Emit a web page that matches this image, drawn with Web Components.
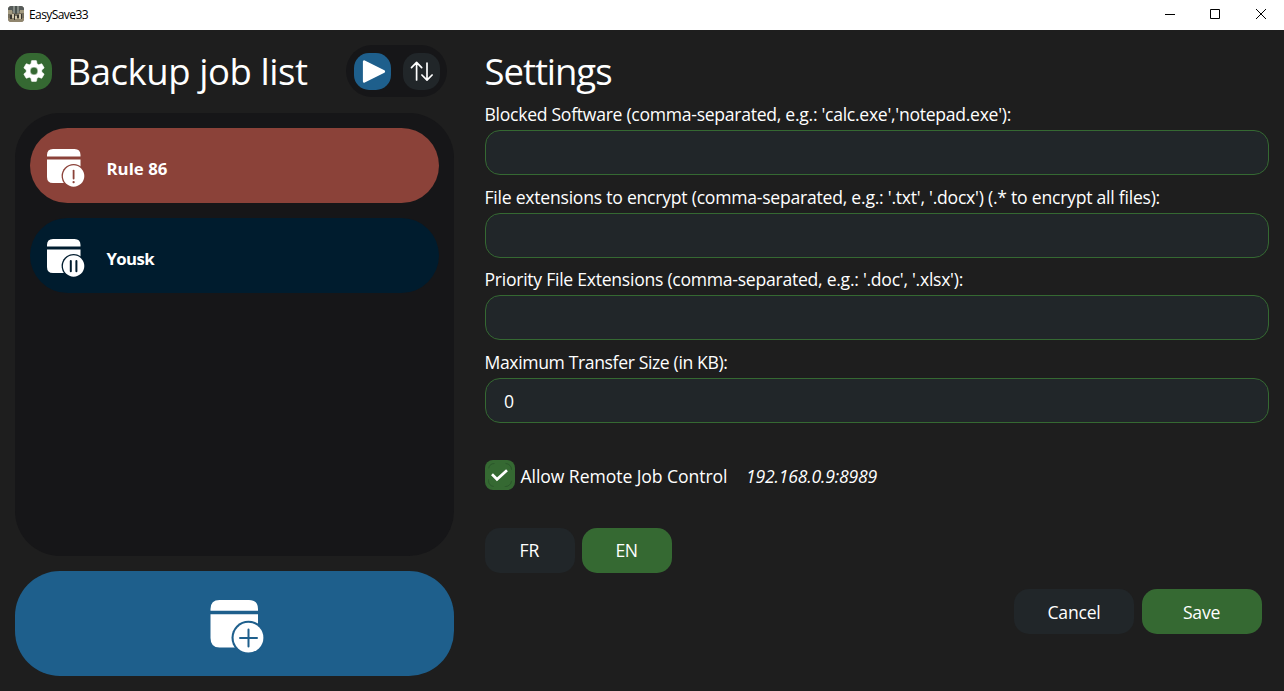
<!DOCTYPE html>
<html lang="en"><head><meta charset="utf-8"><title>EasySave33</title>
<style>
html,body{margin:0;height:100%;overflow:hidden;background:#1e1e1e}
body{font-family:"Open Sans","Noto Sans",sans-serif;color:#fff}
</style></head><body>
<easy-app></easy-app>
<script>
const define=(name,html,setup)=>customElements.define(name,class extends HTMLElement{
  connectedCallback(){
    if(this.shadowRoot)return;
    this.attachShadow({mode:'open'}).innerHTML=html;
    if(setup)setup(this,this.shadowRoot);
  }
});

/* A single line of text whose tracking is adjusted to fill the width w. */
define('fit-text','<style>:host{display:block;white-space:nowrap;flex:none}span{display:inline-block}</style><span><slot></slot></span>',(el,r)=>{
  const s=r.querySelector('span'),w=parseFloat(el.getAttribute('w'));
  const n=el.textContent.length;
  s.style.letterSpacing=((w-s.getBoundingClientRect().width)/n)+'px';
  el.style.width=w+'px';
});

define('title-bar',`<style>
:host{display:flex;height:30px;background:#fff;color:#000;align-items:center;padding-left:8px;box-sizing:border-box}
fit-text{font:12px/16px "Open Sans",sans-serif;margin:0 auto 0 5px}
.c{width:46px;height:30px;flex:none;display:block}.l{display:block;margin-top:-2px}
</style>
<svg class="l" width="16" height="16" viewBox="0 0 16 16"><defs><clipPath id="k"><rect width="16" height="16" rx="3.5"/></clipPath></defs><g clip-path="url(#k)"><rect width="16" height="16" fill="#77705f"/><path d="M0 0h16v5H0z" fill="#565b59"/><path d="M5 0h6v7H5z" fill="#858b85"/><path d="M7 0h2v8H7z" fill="#4b524f"/><path d="M0 4h4v4H0zM12 4h4v3h-4z" fill="#a39a80"/><path d="M0 12h16v4H0z" fill="#91866e"/><path d="M2 9h2v4H2zM6 8h1v6H6zM9 9h2v3H9zM13 8h1v5h-1z" fill="#3a362f"/><path d="M4 8h2v4H4zM7 10h2v3H7zM11 8h2v5h-2z" fill="#d0c6ac"/></g></svg>
<fit-text w="59">EasySave33</fit-text>
<svg class="c" viewBox="0 0 46 30"><path d="M19 14.5h10" stroke="#000"/></svg>
<svg class="c" viewBox="0 0 46 30"><path d="M18.5 9.5h9v9h-9z" fill="none" stroke="#000"/></svg>
<svg class="c" viewBox="0 0 46 30"><path d="M18 9l10 10M28 9l-10 10" stroke="#000"/></svg>`);

define('icon-button',`<style>
:host{display:flex;flex:none;width:37px;height:37px;border-radius:15px;align-items:center;justify-content:center;background:var(--bg)}
</style><slot></slot>`);

/* Card icon with a round badge in its corner. */
define('job-icon','<style>:host{display:block;flex:none}svg{display:block;overflow:visible}</style><div></div>',(el,r)=>{
  const k=el.getAttribute('kind'),bg=el.getAttribute('bg');
  r.querySelector('div').innerHTML=k==='plus'
  ?`<svg width="54" height="54" viewBox="0 0 54 54" fill="#fff"><path d="M.5 10.7V9q0-9 9-9H39q9 0 9 9v1.7zM.5 14.3H48V38q0 9.5-9.5 9.5h-29Q.5 47.5.5 38z"/><circle cx="38.5" cy="37.7" r="17" fill="${bg}"/><circle cx="38.5" cy="37.7" r="14.9"/><path d="M38.5 29.5v17M30 38h17" stroke="${bg}" stroke-width="2" stroke-linecap="round"/></svg>`
  :`<svg width="38" height="39" viewBox="0 0 38 39" fill="#fff"><path d="M0 7.5V6Q0 0 6 0h21.5Q33.5 0 33.5 6v1.5zM0 10.5h33.5V28Q33.5 34 27.5 34H6Q0 34 0 28z"/><circle cx="26.6" cy="27" r="12" fill="${bg}"/><circle cx="26.6" cy="27" r="10.7"/><g stroke="${bg}" stroke-linecap="round">${k==='alert'?'<path d="M26.6 21.6v8" stroke-width="1.8"/><path d="M26.6 33v.2" stroke-width="2.2"/>':'<path d="M23.8 21.9v10.4M29.4 21.9v10.4" stroke-width="2"/>'}</g></svg>`;
});

define('job-row',`<style>
:host{display:flex;flex:none;box-sizing:border-box;height:75px;border-radius:37.5px;background:var(--bg);align-items:center;padding-left:17px;font:700 16.8px/24px "Open Sans",sans-serif}
job-icon{margin-top:5px;margin-right:21.5px}
slot{display:block;margin-top:7px}
</style><div id="i"></div><slot></slot>`,(el,r)=>{
  const bg=el.getAttribute('bg'),i=document.createElement('job-icon');
  el.style.setProperty('--bg',bg);
  i.setAttribute('kind',el.getAttribute('kind'));i.setAttribute('bg',bg);
  r.querySelector('#i').replaceWith(i);
});

define('job-panel',`<style>
:host{display:flex;flex-direction:column;width:439.5px;flex:none}
header{display:flex;align-items:center;height:52px;margin-top:15px}
h1{margin:0 0 0 15.5px;font-weight:400;font-size:36.5px;line-height:50px}
.tools{margin-left:auto;margin-right:7.3px;display:flex;gap:12px;padding:0 7.7px;height:52px;background:#161618;border-radius:26px;align-items:center}
.list{margin-top:16px;height:413px;padding:15px;width:409.4px;background:#161618;border-radius:45px;display:flex;flex-direction:column;gap:15px}
.add{margin-top:15px;height:105px;width:439.4px;border-radius:45px;background:#1e5f8c;display:flex;align-items:center;justify-content:center}
.add job-icon{margin:6px 0 0 4.6px}
svg{display:block}
</style>
<header>
<icon-button style="--bg:#356932"><svg width="26" height="26" viewBox="0 0 24 24"><path fill="#fff" d="M19.14 12.94c.04-.3.06-.61.06-.94 0-.32-.02-.64-.07-.94l2.03-1.58a.49.49 0 0 0 .12-.61l-1.92-3.32a.488.488 0 0 0-.59-.22l-2.39.96c-.5-.38-1.03-.7-1.62-.94l-.36-2.54a.484.484 0 0 0-.48-.41h-3.84c-.24 0-.43.17-.47.41l-.36 2.54c-.59.24-1.13.57-1.62.94l-2.39-.96c-.22-.08-.47 0-.59.22L2.74 8.87c-.12.21-.08.47.12.61l2.03 1.58c-.05.3-.09.63-.09.94s.02.64.07.94l-2.03 1.58a.49.49 0 0 0-.12.61l1.92 3.32c.12.22.37.29.59.22l2.39-.96c.5.38 1.03.7 1.62.94l.36 2.54c.05.24.24.41.48.41h3.84c.24 0 .44-.17.47-.41l.36-2.54c.59-.24 1.13-.56 1.62-.94l2.39.96c.22.08.47 0 .59-.22l1.92-3.32c.12-.22.07-.47-.12-.61l-2.01-1.58zM12 15.6A3.6 3.6 0 1 1 12 8.4a3.6 3.6 0 0 1 0 7.2z" stroke="#fff" stroke-width=".5" stroke-linejoin="round"/></svg></icon-button>
<h1><fit-text w="240">Backup job list</fit-text></h1>
<div class="tools"><icon-button style="--bg:#1e5f8c"><svg width="37" height="37" viewBox="0 0 37 37"><path d="M10.2 8.6v19.8l19.6-9.9z" fill="#fff" stroke="#fff" stroke-width="2.6" stroke-linejoin="round"/></svg></icon-button><icon-button style="--bg:#212629"><svg width="37" height="37" viewBox="0 0 37 37" fill="none" stroke="#fff" stroke-width="1.7" stroke-linecap="round" stroke-linejoin="round"><path d="M13.6 27V9.5M8.5 14.6l5.1-5.2 5.1 5.2M24 10v17M18.9 22l5.1 5.2 5.1-5.2"/></svg></icon-button></div>
</header>
<div class="list">
<job-row kind="alert" bg="#8b4239"><fit-text w="61">Rule 86</fit-text></job-row>
<job-row kind="pause" bg="#001c2e"><fit-text w="47.5">Yousk</fit-text></job-row>
</div>
<div class="add"><job-icon kind="plus" bg="#1e5f8c"></job-icon></div>`);

define('text-field',`<style>
:host{display:block;height:82.5px}
.label{height:27px;font:17.6px/27px "Open Sans",sans-serif;padding-top:1px}
.box{box-sizing:border-box;height:45px;border:1.25px solid #356932;border-radius:15px;background:#212629;margin-top:2px;padding:2px 18.5px 0;font:17.6px/41px "Open Sans",sans-serif}
</style><div class="label"><fit-text></fit-text></div><div class="box"></div>`,(el,r)=>{
  const f=document.createElement('fit-text');
  f.setAttribute('w',el.getAttribute('w'));f.textContent=el.getAttribute('label');
  r.querySelector('fit-text').replaceWith(f);
  r.querySelector('.box').textContent=el.getAttribute('value')||'';
});

define('pill-button',`<style>
:host{display:flex;justify-content:center;align-items:center;box-sizing:border-box;width:90px;height:45px;border-radius:15px;background:var(--bg,#212629);font:17.6px/24px "Open Sans",sans-serif}
</style><slot></slot>`);

define('settings-panel',`<style>
:host{display:flex;flex-direction:column;flex:1;margin-left:30px}
h2{margin:16px 0 0;font-size:36.5px;line-height:50px;font-weight:400;height:54.3px}
.check{display:flex;align-items:center;height:30px;margin-top:29.7px;font:17.6px/24px "Open Sans",sans-serif}
.box{width:30px;height:30px;border-radius:8px;background:#356932;flex:none}
.check fit-text{margin:2px 0 0 6px}
.check .ip{font-style:italic;margin-left:18.5px}
.lang{display:flex;gap:7px;margin-top:38px}
.actions{display:flex;justify-content:flex-end;gap:7.5px;margin:16px 7.5px 0 0}
.actions pill-button{width:120px;padding-top:1px}
</style>
<h2><fit-text w="127">Settings</fit-text></h2>
<text-field w="526.5" label="Blocked Software (comma-separated, e.g.: 'calc.exe','notepad.exe'):"></text-field>
<text-field w="675.5" label="File extensions to encrypt (comma-separated, e.g.: '.txt', '.docx') (.* to encrypt all files):"></text-field>
<text-field w="478.5" label="Priority File Extensions (comma-separated, e.g.: '.doc', '.xlsx'):"></text-field>
<text-field w="243" label="Maximum Transfer Size (in KB):" value="0"></text-field>
<div class="check"><svg class="box" viewBox="0 0 30 30"><rect x="3.5" y="3.5" width="23" height="23" rx="6" fill="none" stroke="#285029" stroke-width=".7" stroke-dasharray="9.4 11.16" stroke-dashoffset="-11.1"/><path d="M7 14.3l5 5 10-9" fill="none" stroke="#fff" stroke-width="2.7"/></svg><fit-text w="207">Allow Remote Job Control</fit-text><fit-text class="ip" w="131">192.168.0.9:8989</fit-text></div>
<div class="lang"><pill-button><fit-text w="20">FR</fit-text></pill-button><pill-button style="--bg:#356932"><fit-text w="22">EN</fit-text></pill-button></div>
<div class="actions"><pill-button><fit-text w="53">Cancel</fit-text></pill-button><pill-button style="--bg:#356932"><fit-text w="37">Save</fit-text></pill-button></div>`);

define('easy-app',`<style>
:host{display:flex;flex-direction:column;height:691px;background:#1e1e1e}
main{display:flex;padding:0 15px;flex:1}
</style><title-bar></title-bar><main><job-panel></job-panel><settings-panel></settings-panel></main>`);
</script></body></html>
